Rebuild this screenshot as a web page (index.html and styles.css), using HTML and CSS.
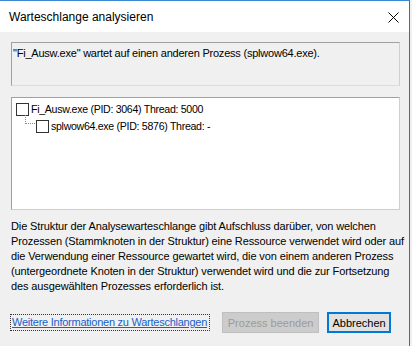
FILE: index.html
```html
<html>
<head>
  <meta charset="UTF-8">
  <title>Warteschlange analysieren</title>
  <link rel="stylesheet" href="styles.css">
</head>
<body>
  <div class="window">
    <div class="titlebar">
      <span class="title">Warteschlange analysieren</span>
      <svg class="close" width="11" height="11" viewBox="0 0 11 11">
        <path d="M0.5 0.5 L10.5 10.5 M10.5 0.5 L0.5 10.5" stroke="#000" stroke-width="1" fill="none"/>
      </svg>
    </div>
    <div class="content">
      <div class="message">"Fi_Ausw.exe" wartet auf einen anderen Prozess (splwow64.exe).</div>
      <div class="tree">
        <div class="node">
          <span class="check"></span>
          <span class="label">Fi_Ausw.exe (PID: 3064) Thread: 5000</span>
        </div>
        <div class="node child">
          <span class="line"></span>
          <span class="check"></span>
          <span class="label">splwow64.exe (PID: 5876) Thread: -</span>
        </div>
      </div>
      <p class="info">Die Struktur der Analysewarteschlange gibt Aufschluss darüber, von welchen<br>
        Prozessen (Stammknoten in der Struktur) eine Ressource verwendet wird oder auf<br>
        die Verwendung einer Ressource gewartet wird, die von einem anderen Prozess<br>
        (untergeordnete Knoten in der Struktur) verwendet wird und die zur Fortsetzung<br>
        des ausgewählten Prozesses erforderlich ist.</p>
      <div class="footer">
        <a class="more" href="#">Weitere Informationen zu Warteschlangen</a>
        <button class="btn disabled">Prozess beenden</button>
        <button class="btn default">Abbrechen</button>
      </div>
    </div>
  </div>
</body>
</html>
```
FILE: styles.css
```css
body {
  margin: 0;
  background: #f0f0f0;
  font-family: "Liberation Sans", Arial, sans-serif;
  font-size: 11px;
  color: #000;
}
.window {
  width: 409px;
  height: 345px;
  background: #f0f0f0;
  border-top: 1px solid #3c8ad6;
  border-right: 1px solid #2b72c2;
}
.titlebar {
  height: 31px;
  background: #fff;
  display: flex;
  align-items: center;
  justify-content: space-between;
  padding: 0 10px 0 9px;
}
.title {
  font-size: 12px;
  font-family: "Liberation Sans", Arial, sans-serif;
  color: #000;
}
.close {
  display: block;
  margin-top: 1px;
}
.content {
  padding: 10px 9px 0 11px;
}
.message {
  height: 38px;
  padding: 4px 2px 0 1px;
  border: 1px solid #a0a0a0;
  border-right-color: #cfcfcf;
  border-bottom-color: #dcdcdc;
  line-height: 13px;
  letter-spacing: -0.22px;
}
.tree {
  margin-top: 11px;
  height: 108px;
  background: #fff;
  border: 1px solid #828790;
  border-color: #a0a0a0 #cfcfcf #cfcfcf #a0a0a0;
  padding: 3px 4px 0 4px;
}
.node {
  display: flex;
  align-items: center;
  height: 17px;
}
.check {
  width: 11px;
  height: 11px;
  border: 1px solid #333;
  background: #fff;
  margin-right: 2px;
}
.label {
  line-height: 13px;
  letter-spacing: -0.3px;
  font-size: 10.6px;
}
.child {
  padding-left: 9px;
}
.line {
  width: 10px;
  height: 9px;
  align-self: flex-start;
  margin-top: -3px;
  border-left: 1px dotted #8a8a8a;
  border-bottom: 1px dotted #8a8a8a;
  box-sizing: border-box;
  margin-right: 1px;
}
.info {
  margin: 9px -9px 0 0;
  line-height: 15px;
  white-space: nowrap;
  letter-spacing: -0.12px;
}
.footer {
  display: flex;
  align-items: center;
  margin-top: 18px;
}
.more {
  color: #1a5fc8;
  text-decoration: underline;
  outline: 1px dotted #333;
  outline-offset: 0;
  padding: 1px 2px 1px 1px;
  margin-right: 13px;
  line-height: 13px;
  letter-spacing: -0.25px;
}
.btn {
  height: 21px;
  font-family: "Liberation Sans", Arial, sans-serif;
  font-size: 11px;
  padding: 0;
}
.disabled {
  width: 97px;
  background: #cccccc;
  border: 1px solid #bfbfbf;
  color: #9b9b9b;
  margin-right: 8px;
}
.default {
  width: 64px;
  background: #e1e1e1;
  border: 2px solid #0078d7;
  color: #000;
}
```
